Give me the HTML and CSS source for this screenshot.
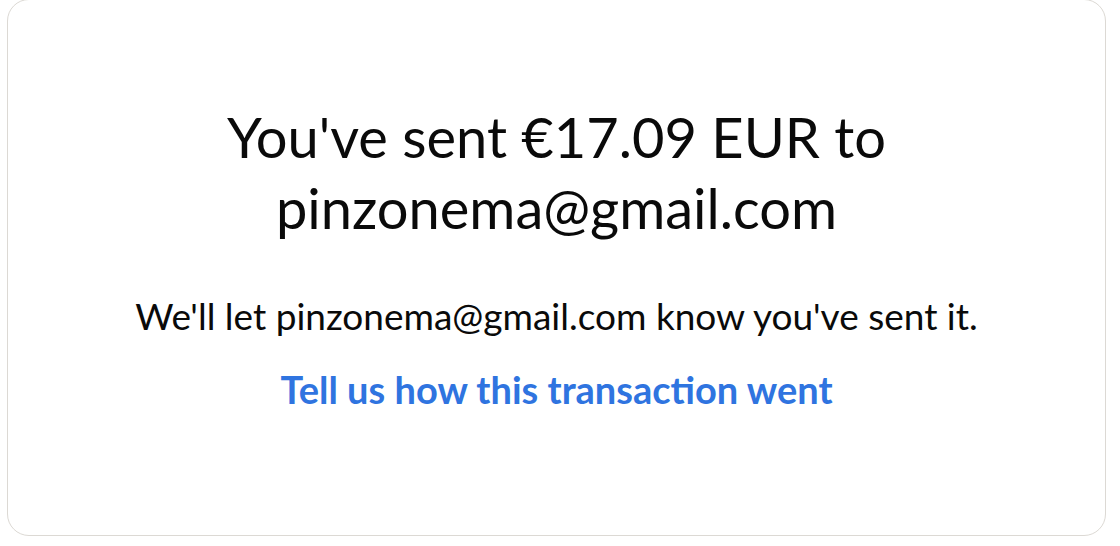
FILE: index.html
```html
<!DOCTYPE html>
<html>
<head>
    <title>Payment sent</title>
    <link rel="stylesheet" href="styles.css">
</head>
<body>
    <div class="card">
        <h1 class="title">You've sent €17.09 EUR to<br>pinzonema@gmail.com</h1>
        <p class="note">We'll let pinzonema@gmail.com know you've sent it.</p>
        <a class="feedback" href="#">Tell us how this transaction went</a>
    </div>
</body>
</html>
```

FILE: styles.css
```css
body {
    font-family: Lato, "Noto Sans", sans-serif;
    background-color: #fff;
    margin: 0;
}
.card {
    box-sizing: border-box;
    height: 537px;
    margin: -1px 14px 0 7px;
    border: 1.5px solid #dcd9d4;
    border-radius: 22px;
    display: flex;
    flex-direction: column;
    align-items: center;
    text-align: center;
    padding-top: 101px;
    color: #0a0a0a;
}
.title {
    margin: 0;
    font-size: 56px;
    font-weight: 400;
    line-height: 71px;
}
.note {
    margin: 51px 0 0;
    font-size: 37px;
    line-height: 44px;
}
.feedback {
    margin-top: 29px;
    font-size: 38px;
    font-weight: 700;
    line-height: 44px;
    color: #2f74e0;
    text-decoration: none;
}
```
